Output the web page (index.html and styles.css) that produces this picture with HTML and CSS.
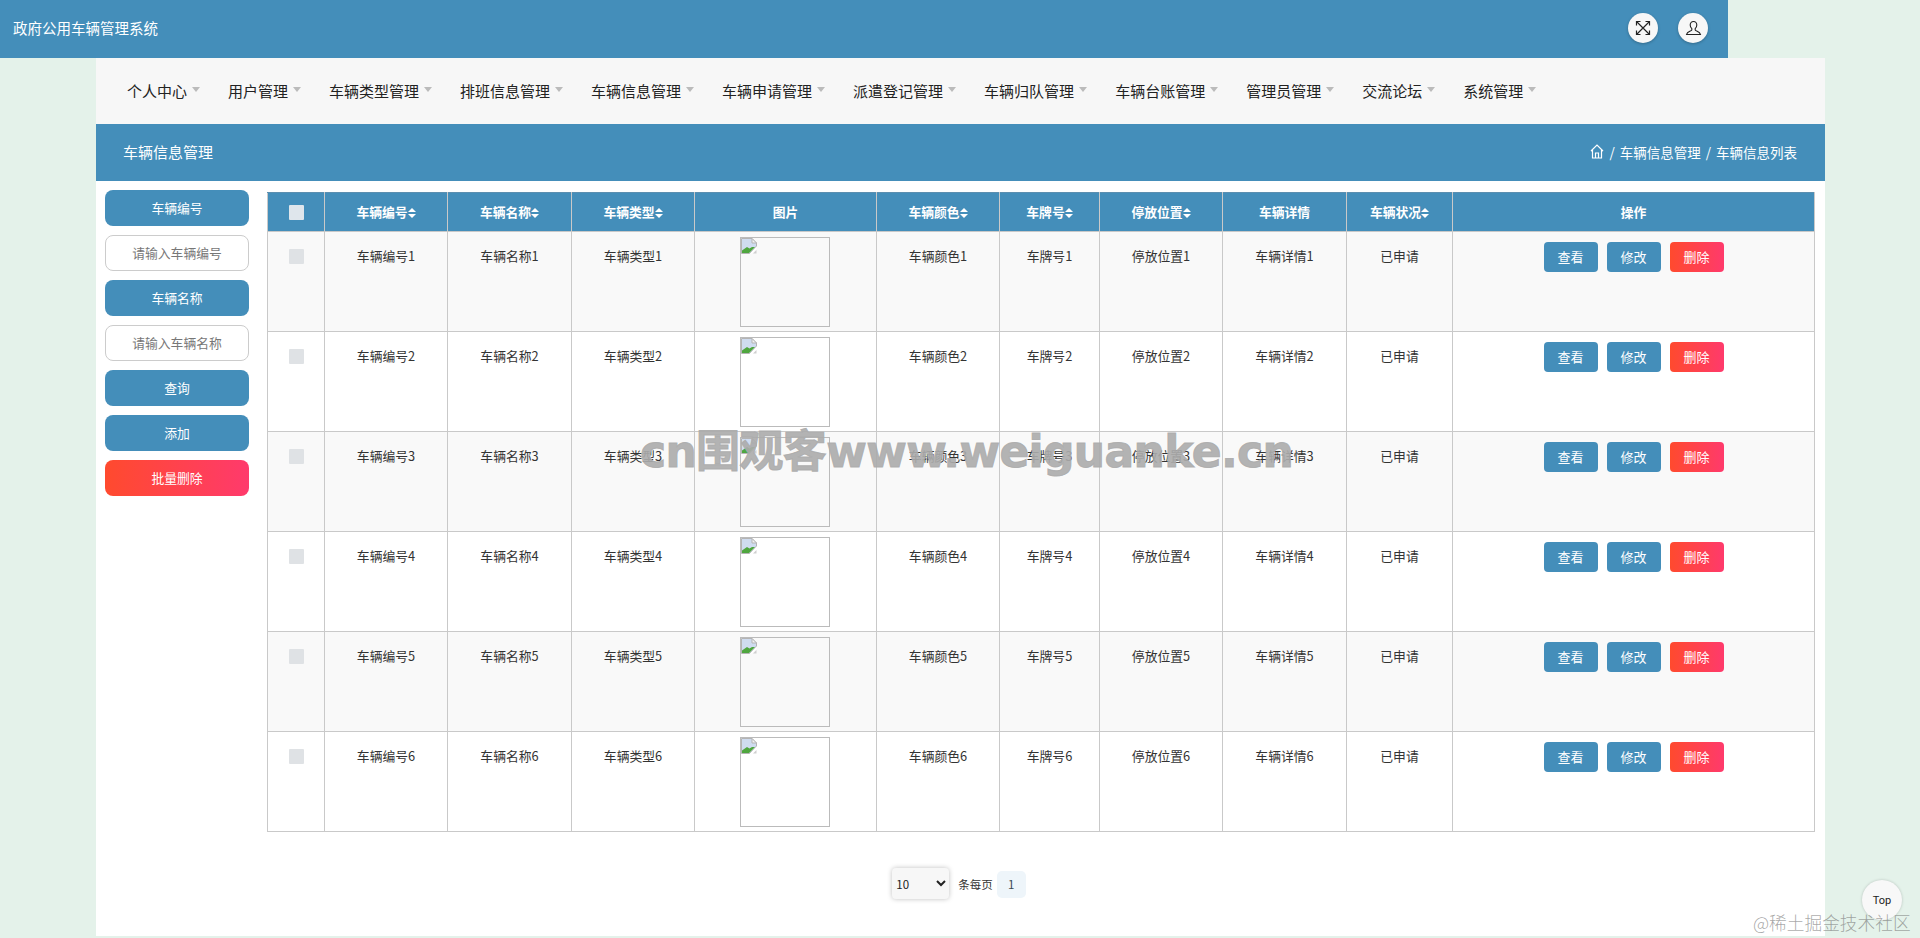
FILE: index.html
```html
<!DOCTYPE html>
<html lang="zh-CN">
<head>
<meta charset="utf-8">
<title>政府公用车辆管理系统</title>
<link rel="stylesheet" href="styles.css">
</head>
<body>
<svg class="defs" width="0" height="0" aria-hidden="true">
  <symbol id="broken" viewBox="0 0 16 16">
    <path d="M.5.5h10.500l4.500 4.500v3l-7 7.500H.5z" fill="#cfdcf0" stroke="#b4b4b4"/>
    <path d="M11 .5V5h4.500z" fill="#f4f4f4" stroke="#b4b4b4"/>
    <path d="M1 15v-2.500L6 9l2.500 1.500L11 9l3 0-6 6z" fill="#4fa63f"/>
    <path d="M9 15.500l6.500-6.500v2l-4.500 4.500z" fill="#fff"/>
    <path d="M12 15.500l3.500-3.500v3.500z" fill="#cfcfcf"/>
  </symbol>
  <symbol id="sort" viewBox="0 0 8 10">
    <path d="M4 0l4 4H0zM4 10L0 6h8z" fill="currentColor"/>
  </symbol>
</svg>
<header class="topbar">
  <div class="brand">政府公用车辆管理系统</div>
  <div class="top-actions">
    <span class="round-btn">
      <svg width="16" height="16" viewBox="0 0 16 16" fill="none" stroke="#222" stroke-width="1.2"><path d="M2 2l12 12M14 2L2 14"/><path d="M1.5 5.5v-4h4M10.500 1.500h4v4M14.500 10.500v4h-4M5.500 14.500h-4v-4"/></svg>
    </span>
    <span class="round-btn">
      <svg width="17" height="17" viewBox="0 0 16 17" fill="none" stroke="#222" stroke-width="1.1"><path d="M8 1.500c-2.100 0-3.300 1.500-3.300 3.500 0 1.500.7 2.800 1.600 3.600v1.300c0 1-4.800 1.600-5.300 4.600h14c-.5-3-5.300-3.600-5.300-4.600V8.600c.9-.8 1.600-2.100 1.600-3.600 0-2-1.200-3.500-3.300-3.500z"/></svg>
    </span>
  </div>
</header>
<main class="panel">
  <nav class="menu">
    <a class="menu-item">个人中心<i class="caret"></i></a>
    <a class="menu-item">用户管理<i class="caret"></i></a>
    <a class="menu-item">车辆类型管理<i class="caret"></i></a>
    <a class="menu-item">排班信息管理<i class="caret"></i></a>
    <a class="menu-item">车辆信息管理<i class="caret"></i></a>
    <a class="menu-item">车辆申请管理<i class="caret"></i></a>
    <a class="menu-item">派遣登记管理<i class="caret"></i></a>
    <a class="menu-item">车辆归队管理<i class="caret"></i></a>
    <a class="menu-item">车辆台账管理<i class="caret"></i></a>
    <a class="menu-item">管理员管理<i class="caret"></i></a>
    <a class="menu-item">交流论坛<i class="caret"></i></a>
    <a class="menu-item">系统管理<i class="caret"></i></a>
  </nav>
  <div class="band">
    <h1 class="band-title">车辆信息管理</h1>
    <div class="crumbs">
      <svg width="14" height="15" viewBox="0 0 14 15" fill="none" stroke="#fff" stroke-width="1.200"><path d="M1 7l6-6 6 6M2.500 6v8h9V6M5.500 14V9h3v5"/></svg>
      <span>/</span><span>车辆信息管理</span><span>/</span><span>车辆信息列表</span>
    </div>
  </div>
  <div class="content">
    <aside class="side">
      <div class="pill">车辆编号</div>
      <input class="field" placeholder="请输入车辆编号">
      <div class="pill">车辆名称</div>
      <input class="field" placeholder="请输入车辆名称">
      <button class="pill">查询</button>
      <button class="pill">添加</button>
      <button class="pill pill-danger">批量删除</button>
    </aside>
    <section class="data">
      <table class="grid">
        <colgroup>
          <col class="c-check"><col class="c-a"><col class="c-b"><col class="c-a"><col class="c-img"><col class="c-a"><col class="c-s"><col class="c-a"><col class="c-b"><col class="c-st"><col class="c-op">
        </colgroup>
        <thead>
          <tr>
            <th><input type="checkbox" class="tick"></th>
            <th>车辆编号<svg class="sort"><use href="#sort"/></svg></th>
            <th>车辆名称<svg class="sort"><use href="#sort"/></svg></th>
            <th>车辆类型<svg class="sort"><use href="#sort"/></svg></th>
            <th>图片</th>
            <th>车辆颜色<svg class="sort"><use href="#sort"/></svg></th>
            <th>车牌号<svg class="sort"><use href="#sort"/></svg></th>
            <th>停放位置<svg class="sort"><use href="#sort"/></svg></th>
            <th>车辆详情</th>
            <th>车辆状况<svg class="sort"><use href="#sort"/></svg></th>
            <th>操作</th>
          </tr>
        </thead>
        <tbody>
          <tr>
            <td><input type="checkbox" class="tick"></td><td>车辆编号1</td><td>车辆名称1</td><td>车辆类型1</td>
            <td class="img-cell"><div class="photo"><svg class="broken"><use href="#broken"/></svg></div></td>
            <td>车辆颜色1</td><td>车牌号1</td><td>停放位置1</td><td>车辆详情1</td><td>已申请</td>
            <td class="ops"><button class="act">查看</button><button class="act">修改</button><button class="act act-del">删除</button></td>
          </tr>
          <tr>
            <td><input type="checkbox" class="tick"></td><td>车辆编号2</td><td>车辆名称2</td><td>车辆类型2</td>
            <td class="img-cell"><div class="photo"><svg class="broken"><use href="#broken"/></svg></div></td>
            <td>车辆颜色2</td><td>车牌号2</td><td>停放位置2</td><td>车辆详情2</td><td>已申请</td>
            <td class="ops"><button class="act">查看</button><button class="act">修改</button><button class="act act-del">删除</button></td>
          </tr>
          <tr>
            <td><input type="checkbox" class="tick"></td><td>车辆编号3</td><td>车辆名称3</td><td>车辆类型3</td>
            <td class="img-cell"><div class="photo"><svg class="broken"><use href="#broken"/></svg></div></td>
            <td>车辆颜色3</td><td>车牌号3</td><td>停放位置3</td><td>车辆详情3</td><td>已申请</td>
            <td class="ops"><button class="act">查看</button><button class="act">修改</button><button class="act act-del">删除</button></td>
          </tr>
          <tr>
            <td><input type="checkbox" class="tick"></td><td>车辆编号4</td><td>车辆名称4</td><td>车辆类型4</td>
            <td class="img-cell"><div class="photo"><svg class="broken"><use href="#broken"/></svg></div></td>
            <td>车辆颜色4</td><td>车牌号4</td><td>停放位置4</td><td>车辆详情4</td><td>已申请</td>
            <td class="ops"><button class="act">查看</button><button class="act">修改</button><button class="act act-del">删除</button></td>
          </tr>
          <tr>
            <td><input type="checkbox" class="tick"></td><td>车辆编号5</td><td>车辆名称5</td><td>车辆类型5</td>
            <td class="img-cell"><div class="photo"><svg class="broken"><use href="#broken"/></svg></div></td>
            <td>车辆颜色5</td><td>车牌号5</td><td>停放位置5</td><td>车辆详情5</td><td>已申请</td>
            <td class="ops"><button class="act">查看</button><button class="act">修改</button><button class="act act-del">删除</button></td>
          </tr>
          <tr>
            <td><input type="checkbox" class="tick"></td><td>车辆编号6</td><td>车辆名称6</td><td>车辆类型6</td>
            <td class="img-cell"><div class="photo"><svg class="broken"><use href="#broken"/></svg></div></td>
            <td>车辆颜色6</td><td>车牌号6</td><td>停放位置6</td><td>车辆详情6</td><td>已申请</td>
            <td class="ops"><button class="act">查看</button><button class="act">修改</button><button class="act act-del">删除</button></td>
          </tr>
        </tbody>
      </table>
    </section>
  </div>
  <div class="pager">
    <select class="size"><option>10</option><option>20</option></select>
    <span class="per">条每页</span>
    <span class="page">1</span>
  </div>
</main>
<div class="to-top">Top</div>
<div class="mark-site">cn围观客www.weiguanke.cn</div>
<div class="mark-juejin">@稀土掘金技术社区</div>
</body>
</html>
```
FILE: styles.css
```css
* { box-sizing: border-box; }
html, body { margin: 0; height: 938px; overflow: hidden; }
body {
  background: #e4f2ea;
  color: #333;
  font-family: "Noto Sans CJK SC", "Liberation Sans", sans-serif;
  font-size: 13px;
  position: relative;
}
.defs { position: absolute; }

.topbar {
  width: 1728px;
  height: 58px;
  background: #448eba;
  display: flex;
  align-items: center;
  justify-content: space-between;
  padding: 0 20px 2px 13px;
}
.brand { color: #fff; font-size: 14.5px; line-height: 20px; margin-top: -1px; }
.top-actions { display: flex; gap: 20px; }
.round-btn {
  width: 30px;
  height: 30px;
  border-radius: 50%;
  background: #f7f7f7;
  box-shadow: 0 1px 3px rgba(0, 0, 0, .25);
  display: flex;
  align-items: center;
  justify-content: center;
}

.panel {
  width: 1729px;
  height: 878px;
  margin-left: 96px;
  background: #fff;
}
.menu {
  height: 66px;
  background: #f7f7f7;
  display: flex;
  align-items: center;
  padding: 0 0 1px 17px;
}
.menu-item {
  color: #222;
  font-size: 15px;
  line-height: 20px;
  padding: 0 14px;
  display: flex;
  align-items: center;
}
.caret {
  width: 0;
  height: 0;
  margin: -3px 0 0 5px;
  border: 4px solid transparent;
  border-top: 5px solid #bbb;
  border-bottom: 0;
}
.band {
  height: 57px;
  background: #448eba;
  color: #fff;
  display: flex;
  align-items: center;
  justify-content: space-between;
  padding: 0 28px 2px 27px;
}
.band-title { margin: 0; font-size: 15px; font-weight: 400; }
.crumbs { display: flex; align-items: center; gap: 5px; font-size: 13.500px; }

.content { display: flex; align-items: flex-start; padding: 9px 0 0 9px; gap: 18px; }
.side { width: 144px; display: flex; flex-direction: column; gap: 9px; }
.pill {
  height: 36px;
  border: 0;
  border-radius: 8px;
  background: #448eba;
  color: #fff;
  font: inherit;
  font-size: 12.800px;
  display: flex;
  align-items: center;
  justify-content: center;
  padding: 0 0 2px;
}
.pill-danger { background: linear-gradient(90deg, #ff4a2e, #ff3a6c); }
.field {
  height: 36px;
  width: 100%;
  border: 1px solid #ccc;
  border-radius: 8px;
  background: #fff;
  font: inherit;
  font-size: 12.800px;
  text-align: center;
  padding: 0 0 2px;
}
.field::placeholder { color: #777; opacity: 1; }

.data { width: 1548px; padding-top: 2px; }
.grid {
  width: 1547px;
  table-layout: fixed;
  border-collapse: collapse;
  font-size: 12.800px;
}
.c-check { width: 57px; }
.c-a { width: 123px; }
.c-b { width: 124px; }
.c-img { width: 182px; }
.c-s { width: 100px; }
.c-st { width: 106px; }
.c-op { width: 362px; }
.grid th {
  height: 39px;
  background: #448eba;
  color: #fff;
  font-weight: 700;
  border: 1px solid #c9c9c9;
  border-top-color: #5b8fb0;
  padding: 0 0 2px;
  text-align: center;
  vertical-align: middle;
}
.grid td {
  height: 100px;
  border: 1px solid #c9c9c9;
  text-align: center;
  vertical-align: top;
  padding: 14px 0 0;
  line-height: 20px;
  color: #333;
}
.grid tbody tr:nth-child(odd) td { background: #f9f9f9; }
.sort { width: 8px; height: 10px; vertical-align: -1px; color: #fff; }
.tick {
  appearance: none;
  display: block;
  width: 15px;
  height: 15px;
  margin: 3px auto 0;
  background: #dfe2e5;
  border: 0;
  border-radius: 1px;
}
.grid th .tick { margin-top: 2px; background: #dfe6ec; }
.grid td.img-cell { padding: 5px 2px 0 0; }
.photo {
  width: 90px;
  height: 90px;
  margin: 0 auto;
  border: 1px solid #bbb;
  background: #fff;
  line-height: 0;
  text-align: left;
}
.grid tbody tr:nth-child(odd) .photo { background: #f9f9f9; }
.broken { width: 16px; height: 16px; }
.grid td.ops { padding-top: 10px; }
.act {
  width: 54px;
  height: 30px;
  margin: 0 4.500px;
  padding: 0;
  border: 0;
  border-radius: 4px;
  background: #448eba;
  color: #fff;
  font: inherit;
  font-size: 13px;
}
.act-del { background: linear-gradient(90deg, #ff4a2e, #ff3a6c); }

.pager {
  margin-top: 36px;
  padding-right: 3px;
  display: flex;
  align-items: center;
  justify-content: center;
  gap: 9px;
  font-size: 11.500px;
  color: #333;
}
.size {
  width: 57px;
  height: 31px;
  border: 0;
  border-radius: 4px;
  background: #f7f7f7;
  box-shadow: 0 0 5px rgba(0, 0, 0, .25);
  font: inherit;
  font-size: 11.500px;
  color: #222;
}
.page {
  width: 29px;
  height: 27px;
  margin: 1px 0 0 -5px;
  border-radius: 5px;
  background: #eef5fa;
  color: #3a4a55;
  display: flex;
  align-items: center;
  justify-content: center;
}

.to-top {
  position: absolute;
  left: 1862px;
  top: 880px;
  width: 40px;
  height: 40px;
  border-radius: 50%;
  background: #f8f8f8;
  box-shadow: 0 0 3px rgba(0, 0, 0, .2);
  color: #222;
  font-family: Roboto, sans-serif;
  font-size: 11px;
  display: flex;
  align-items: center;
  justify-content: center;
}
.mark-site {
  position: absolute;
  left: 640px;
  top: 424px;
  font-family: "DejaVu Sans", "Noto Sans CJK SC", sans-serif;
  font-size: 44px;
  line-height: 56px;
  font-weight: 700;
  letter-spacing: -.65px;
  -webkit-text-stroke: 1px rgba(172, 172, 172, .92);
  color: rgba(172, 172, 172, .92);
  white-space: nowrap;
  pointer-events: none;
}
.mark-juejin {
  position: absolute;
  left: 1753px;
  top: 910px;
  font-size: 17.700px;
  line-height: 24px;
  font-weight: 300;
  color: rgba(110, 110, 110, .6);
  white-space: nowrap;
  pointer-events: none;
}
```
